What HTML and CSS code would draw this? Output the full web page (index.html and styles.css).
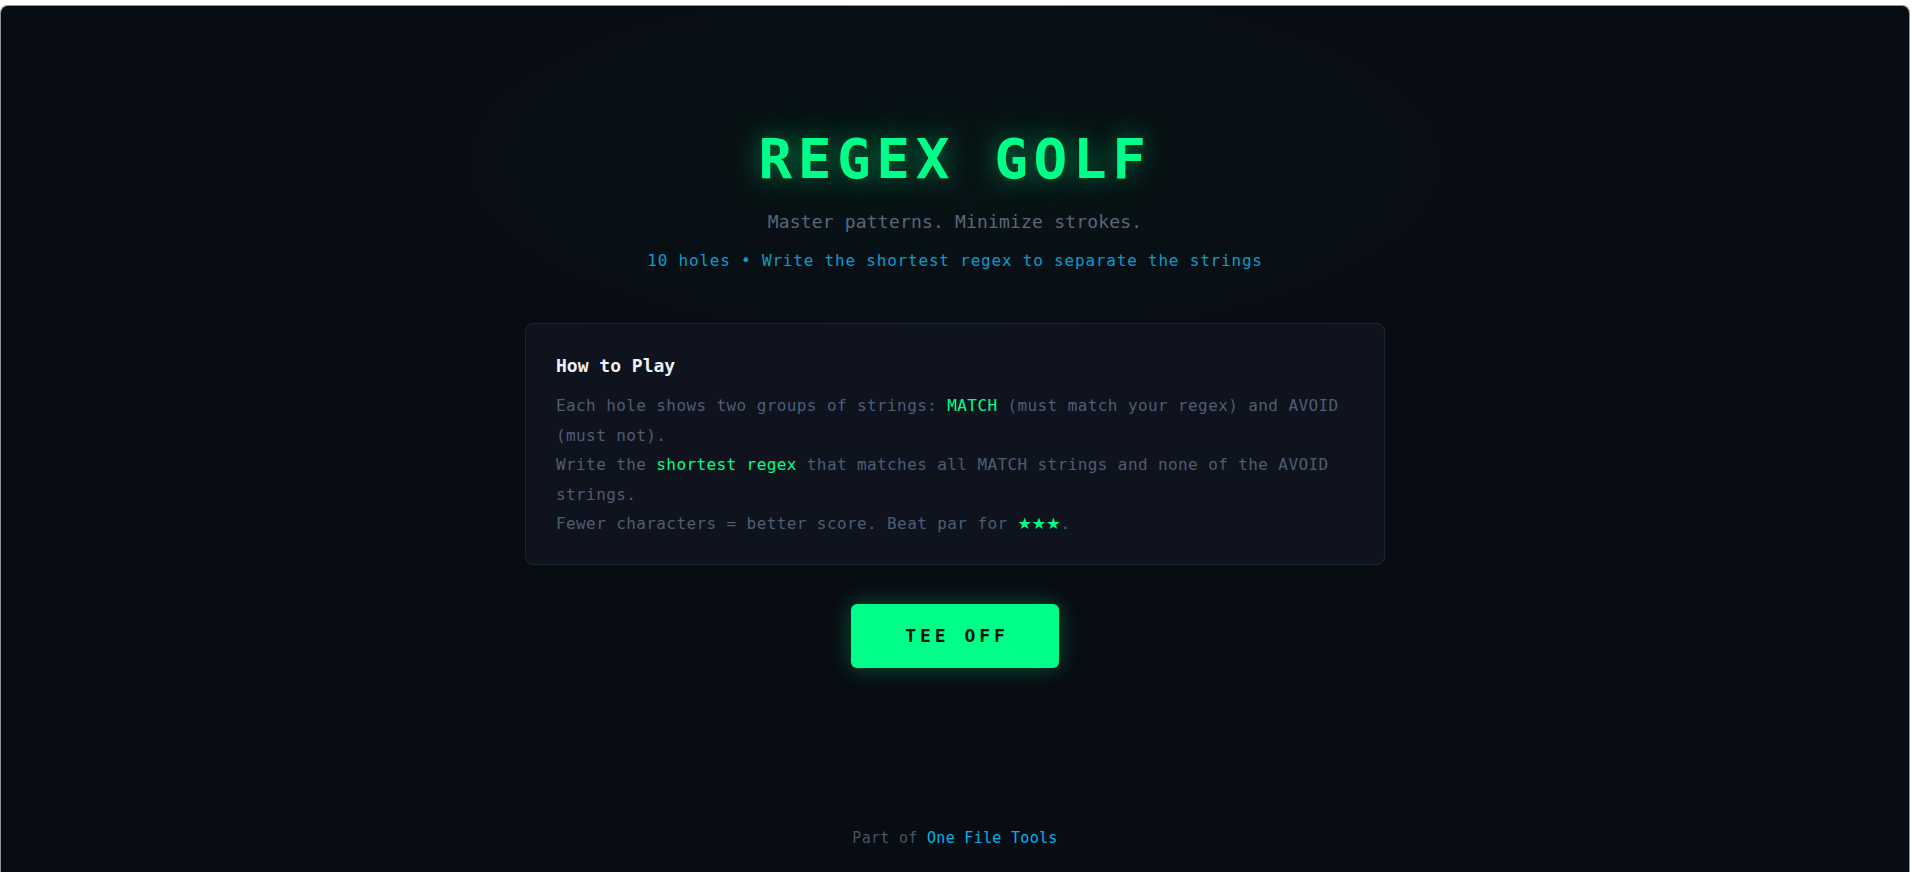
FILE: index.html
```html
<!DOCTYPE html>
<html lang="en">
<head>
    <meta charset="UTF-8">
    <meta name="viewport" content="width=device-width, initial-scale=1.0">
    <title>Regex Golf</title>
    <link rel="stylesheet" href="styles.css">
</head>
<body>

    <div class="screen">
        <header class="intro">
            <h1 class="title">REGEX GOLF</h1>
            <p class="subtitle">Master patterns. Minimize strokes.</p>
            <p class="tagline">10 holes &bull; Write the shortest regex to separate the strings</p>
        </header>

        <section class="rules">
            <h2>How to Play</h2>
            <p>
                Each hole shows two groups of strings: <span class="hl">MATCH</span> (must match your regex) and AVOID (must not).<br>
                Write the <span class="hl">shortest regex</span> that matches all MATCH strings and none of the AVOID strings.<br>
                Fewer characters = better score. Beat par for <span class="hl stars">&#9733;&#9733;&#9733;</span>.
            </p>
        </section>

        <button class="tee-off" id="start">TEE OFF</button>

        <footer class="credit">
            Part of <a href="#">One File Tools</a>
        </footer>
    </div>

</body>
</html>
```

FILE: styles.css
```css
body {
    margin: 0;
    padding: 5px 2px 0 0;
    background: #fff;
    font-family: "DejaVu Sans Mono", monospace;
    overflow: hidden;
}

.screen {
    height: calc(100vh - 5px);
    box-sizing: border-box;
    border: 1px solid #8d939b;
    border-bottom: none;
    border-radius: 8px 8px 0 0;
    background:
        radial-gradient(ellipse 50% 40% at 50% 18%, rgba(0, 255, 136, 0.03), transparent 75%),
        #080c13;
    display: flex;
    flex-direction: column;
    align-items: center;
    padding: 119px 0 23px;
}

.intro {
    text-align: center;
}

.title {
    margin: 0;
    font-size: 56px;
    line-height: 68px;
    font-weight: bold;
    letter-spacing: 0.1em;
    color: #00ff88;
    text-shadow: 0 0 24px rgba(0, 255, 136, 0.45), 0 0 60px rgba(0, 255, 136, 0.15);
}

.subtitle {
    margin: 15px 0 0;
    font-size: 18px;
    line-height: 27px;
    letter-spacing: 0.01em;
    color: #59677d;
}

.tagline {
    margin: 14px 0 0;
    font-size: 16px;
    line-height: 24px;
    letter-spacing: 0.05em;
    color: #0a9ccc;
}

/* how to play card */
.rules {
    width: 860px;
    box-sizing: border-box;
    margin-top: 50px;
    padding: 28px 30px 25px;
    background: #0e131e;
    border: 1px solid #1d2433;
    border-radius: 8px;
}

.rules h2 {
    margin: 0;
    font-size: 18px;
    line-height: 27px;
    font-weight: bold;
    color: #eef1f6;
}

.rules p {
    margin: 12px 0 0;
    font-size: 16px;
    line-height: 29.6px;
    letter-spacing: 0.025em;
    color: #4f5d74;
}

.hl {
    color: #00ff88;
}

.stars {
    font-family: "DejaVu Sans", sans-serif;
    letter-spacing: 0;
}

.tee-off {
    margin-top: 39px;
    padding: 21px 50px 21px 54px;
    font-family: inherit;
    font-size: 18px;
    line-height: 22px;
    font-weight: bold;
    letter-spacing: 0.22em;
    color: #07130d;
    background: #00ff88;
    border: none;
    border-radius: 6px;
    box-shadow: 0 0 22px rgba(0, 255, 136, 0.3);
    cursor: pointer;
}

.tee-off:hover {
    background: #1aff96;
}

.credit {
    margin-top: auto;
    font-size: 15px;
    line-height: 22px;
    letter-spacing: 0.02em;
    color: #46546a;
}

.credit a {
    color: #00b2ea;
    text-decoration: none;
}
```
